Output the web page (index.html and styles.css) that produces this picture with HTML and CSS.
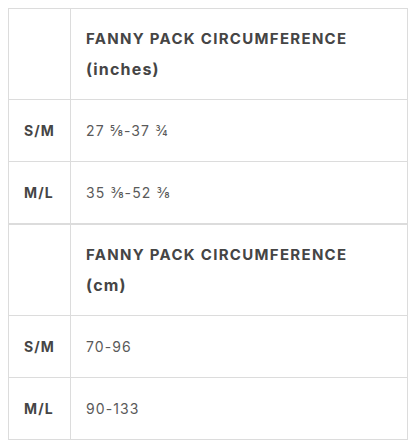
FILE: index.html
```html
<!DOCTYPE html>
<html>
<head>
<meta charset="utf-8">
<link rel="stylesheet" href="styles.css">
</head>
<body>
<table class="size-table">
  <tr class="head-row"><th class="size-col"></th><th class="head">FANNY PACK CIRCUMFERENCE <span class="unit">(inches)</span></th></tr>
  <tr><td class="size">S/M</td><td class="val">27 ⅝-37 ¾</td></tr>
  <tr><td class="size">M/L</td><td class="val">35 ⅜-52 ⅜</td></tr>
</table>
<table class="size-table">
  <tr class="head-row"><th class="size-col"></th><th class="head">FANNY PACK CIRCUMFERENCE <span class="unit">(cm)</span></th></tr>
  <tr><td class="size">S/M</td><td class="val">70-96</td></tr>
  <tr><td class="size">M/L</td><td class="val">90-133</td></tr>
</table>
</body>
</html>
```
FILE: styles.css
```css
body {
  margin: 8px;
  background: #fff;
  font-family: Inter, "Open Sans", sans-serif;
}
.size-table {
  width: 100%;
  border-collapse: collapse;
  border: 1px solid #dcdcdc;
}
.size-table th, .size-table td {
  border: 1px solid #dcdcdc;
  text-align: left;
  vertical-align: middle;
  padding: 0 15px;
}
.size-col { width: 31px; }
.head-row { height: 91px; }
.head {
  font-size: 15px;
  font-weight: 700;
  color: #454545;
  letter-spacing: 1.3px;
  line-height: 30px;
}
.unit {
  display: block;
  font-size: 16px;
  letter-spacing: 1.2px;
  text-transform: none;
}
tr { height: 62px; }
.size {
  font-size: 14px;
  font-weight: 700;
  color: #454545;
  letter-spacing: 1.1px;
}
.val {
  font-size: 14px;
  color: #5a5a5a;
  letter-spacing: 1.1px;
}
```
